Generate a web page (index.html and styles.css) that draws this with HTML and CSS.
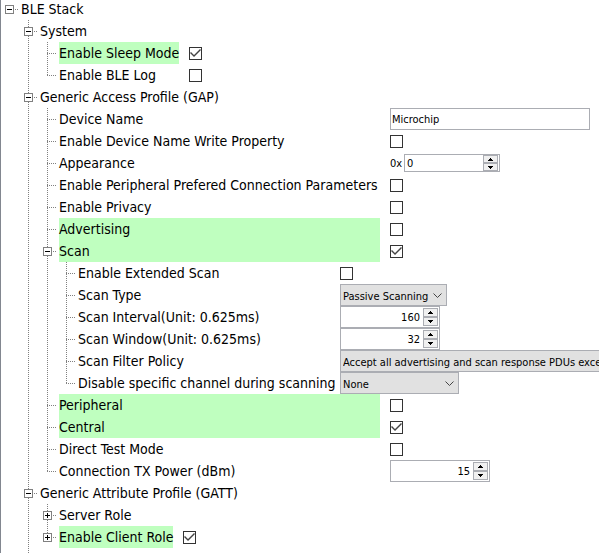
FILE: index.html
```html
<!DOCTYPE html>
<html lang="en">
<head>
<meta charset="utf-8">
<title>BLE Stack</title>
<link rel="stylesheet" href="styles.css">
</head>
<body>
<main class="panel">
<ul class="tree root">
  <li class="node">
    <div class="row"><span class="gutter"><button class="toggle" aria-label="Collapse BLE Stack"></button></span><span class="name">BLE Stack</span></div>
    <ul class="tree">
      <li class="node">
        <div class="row"><span class="gutter"><button class="toggle" aria-label="Collapse System"></button></span><span class="name">System</span></div>
        <ul class="tree cols-system">
          <li class="node"><div class="row"><span class="gutter"></span><label class="name on" for="sleep">Enable Sleep Mode</label><input class="check" type="checkbox" id="sleep" checked></div></li>
          <li class="node"><div class="row"><span class="gutter"></span><label class="name" for="log">Enable BLE Log</label><input class="check" type="checkbox" id="log"></div></li>
        </ul>
      </li>
      <li class="node">
        <div class="row"><span class="gutter"><button class="toggle" aria-label="Collapse Generic Access Profile"></button></span><span class="name">Generic Access Profile (GAP)</span></div>
        <ul class="tree cols-gap">
          <li class="node"><div class="row"><span class="gutter"></span><label class="name" for="device">Device Name</label><input class="text" type="text" id="device" value="Microchip"></div></li>
          <li class="node"><div class="row"><span class="gutter"></span><label class="name" for="write">Enable Device Name Write Property</label><input class="check" type="checkbox" id="write"></div></li>
          <li class="node"><div class="row"><span class="gutter"></span><label class="name" for="appearance">Appearance</label><span class="prefix">0x</span><span class="spinner hex"><input type="text" id="appearance" value="0"><span class="steps"><button aria-label="Increase"><svg viewBox="0 0 5 3"><path d="M2 0h1v1h1v1h1v1H0V2h1V1h1z"/></svg></button><button aria-label="Decrease"><svg viewBox="0 0 5 3"><path d="M0 0h5v1H4v1H3v1H2V2H1V1H0z"/></svg></button></span></span></div></li>
          <li class="node"><div class="row"><span class="gutter"></span><label class="name" for="params">Enable Peripheral Prefered Connection Parameters</label><input class="check" type="checkbox" id="params"></div></li>
          <li class="node"><div class="row"><span class="gutter"></span><label class="name" for="privacy">Enable Privacy</label><input class="check" type="checkbox" id="privacy"></div></li>
          <li class="node"><div class="row"><span class="gutter"></span><label class="name on" for="advertising">Advertising</label><input class="check" type="checkbox" id="advertising"></div></li>
          <li class="node">
            <div class="row"><span class="gutter"><button class="toggle" aria-label="Collapse Scan"></button></span><label class="name on" for="scan">Scan</label><input class="check" type="checkbox" id="scan" checked></div>
            <ul class="tree cols-scan">
              <li class="node"><div class="row"><span class="gutter"></span><label class="name" for="extended">Enable Extended Scan</label><input class="check" type="checkbox" id="extended"></div></li>
              <li class="node"><div class="row"><span class="gutter"></span><label class="name" for="type">Scan Type</label><span class="select type"><select id="type"><option>Passive Scanning</option></select><svg viewBox="0 0 9 6"><path d="M.5.5l4 4 4-4"/></svg></span></div></li>
              <li class="node"><div class="row"><span class="gutter"></span><label class="name" for="interval">Scan Interval(Unit: 0.625ms)</label><span class="spinner"><input type="text" id="interval" value="160"><span class="steps"><button aria-label="Increase"><svg viewBox="0 0 5 3"><path d="M2 0h1v1h1v1h1v1H0V2h1V1h1z"/></svg></button><button aria-label="Decrease"><svg viewBox="0 0 5 3"><path d="M0 0h5v1H4v1H3v1H2V2H1V1H0z"/></svg></button></span></span></div></li>
              <li class="node"><div class="row"><span class="gutter"></span><label class="name" for="window">Scan Window(Unit: 0.625ms)</label><span class="spinner"><input type="text" id="window" value="32"><span class="steps"><button aria-label="Increase"><svg viewBox="0 0 5 3"><path d="M2 0h1v1h1v1h1v1H0V2h1V1h1z"/></svg></button><button aria-label="Decrease"><svg viewBox="0 0 5 3"><path d="M0 0h5v1H4v1H3v1H2V2H1V1H0z"/></svg></button></span></span></div></li>
              <li class="node"><div class="row"><span class="gutter"></span><label class="name" for="policy">Scan Filter Policy</label><span class="select policy"><select id="policy"><option>Accept all advertising and scan response PDUs except</option></select><svg viewBox="0 0 9 6"><path d="M.5.5l4 4 4-4"/></svg></span></div></li>
              <li class="node"><div class="row"><span class="gutter"></span><label class="name" for="channel">Disable specific channel during scanning</label><span class="select channel"><select id="channel"><option>None</option></select><svg viewBox="0 0 9 6"><path d="M.5.5l4 4 4-4"/></svg></span></div></li>
            </ul>
          </li>
          <li class="node"><div class="row"><span class="gutter"></span><label class="name on" for="peripheral">Peripheral</label><input class="check" type="checkbox" id="peripheral"></div></li>
          <li class="node"><div class="row"><span class="gutter"></span><label class="name on" for="central">Central</label><input class="check" type="checkbox" id="central" checked></div></li>
          <li class="node"><div class="row"><span class="gutter"></span><label class="name" for="dtm">Direct Test Mode</label><input class="check" type="checkbox" id="dtm"></div></li>
          <li class="node"><div class="row"><span class="gutter"></span><label class="name" for="power">Connection TX Power (dBm)</label><span class="spinner"><input type="text" id="power" value="15"><span class="steps"><button aria-label="Increase"><svg viewBox="0 0 5 3"><path d="M2 0h1v1h1v1h1v1H0V2h1V1h1z"/></svg></button><button aria-label="Decrease"><svg viewBox="0 0 5 3"><path d="M0 0h5v1H4v1H3v1H2V2H1V1H0z"/></svg></button></span></span></div></li>
        </ul>
      </li>
      <li class="node continues">
        <div class="row"><span class="gutter"><button class="toggle" aria-label="Collapse Generic Attribute Profile"></button></span><span class="name">Generic Attribute Profile (GATT)</span></div>
        <ul class="tree cols-gatt">
          <li class="node"><div class="row"><span class="gutter"><button class="toggle closed" aria-label="Expand Server Role"></button></span><span class="name">Server Role</span></div></li>
          <li class="node"><div class="row"><span class="gutter"><button class="toggle closed" aria-label="Expand Enable Client Role"></button></span><label class="name on" for="client">Enable Client Role</label><input class="check" type="checkbox" id="client" checked></div></li>
        </ul>
      </li>
    </ul>
  </li>
</ul>
</main>
</body>
</html>
```
FILE: styles.css
```css
* { box-sizing: border-box; }

body {
  margin: 0;
  overflow: hidden;
  background: #fff;
  color: #000;
  font: 14px/22px "DejaVu Sans Condensed", Verdana, sans-serif;
}

.panel {
  min-height: 100vh;
  padding-left: 1px;
  border-left: 1px solid #828790;
  overflow: hidden;
}

.tree {
  margin: 0 0 0 19px;
  padding: 0;
  list-style: none;
}

.root { margin: -2px 0 0; }

.node { position: relative; }

/* vertical guide running past the node to its next sibling */
.tree .tree > .node::before {
  content: "";
  position: absolute;
  left: 7px;
  top: 0;
  bottom: 0;
  width: 1px;
  background: repeating-linear-gradient(#808080 0 1px, transparent 1px 2px);
}

.tree .tree > .node:last-child:not(.continues)::before {
  bottom: auto;
  height: 12px;
}

.continues { padding-bottom: 22px; }

.row {
  display: flex;
  align-items: center;
  height: 22px;
}

.gutter {
  flex: none;
  display: flex;
  align-items: center;
  width: 19px;
  height: 22px;
  padding: 1px 0 0 3px;
  background: repeating-linear-gradient(90deg, #808080 0 1px, transparent 1px 2px) 7px 11px / 10px 1px no-repeat;
}

.toggle {
  position: relative;
  width: 9px;
  height: 9px;
  padding: 0;
  border: 1px solid #808080;
  border-radius: 0;
  background: linear-gradient(#000, #000) center / 5px 1px no-repeat #fff;
}

.toggle.closed {
  background:
    linear-gradient(#000, #000) center / 5px 1px no-repeat,
    linear-gradient(#000, #000) center / 1px 5px no-repeat,
    #fff;
}

.name {
  flex: none;
  height: 22px;
  margin-right: 10px;
  white-space: nowrap;
}

.on { background: #bfffbf; }

.cols-system label { width: 120px; }
.cols-gap label { width: 321px; }
.cols-gap .cols-scan label { width: 252px; }
.cols-gatt label { width: 114px; }

.check {
  appearance: none;
  flex: none;
  width: 13px;
  height: 13px;
  margin: 1px 0 0;
  border: 1px solid #333;
  background: #fff;
}

.check:checked::before {
  content: "";
  display: block;
  width: 11px;
  height: 11px;
  background: #444;
  clip-path: polygon(0 5px, 1px 4px, 4px 7px, 10px 1px, 11px 2px, 4px 9px);
}

.text, .prefix, .spinner input, .select select {
  color: #000;
  font: 11px/20px "DejaVu Sans Condensed", Tahoma, sans-serif;
}

.text, .spinner {
  flex: none;
  height: 22px;
  border: 1px solid #abadb3;
  border-radius: 0;
  background: #fff;
}

.text {
  width: 200px;
  padding: 0 1px;
}

.prefix {
  width: 14px;
  padding-top: 1px;
}

.spinner {
  display: flex;
  width: 100px;
  padding: 1px;
}

.spinner input {
  flex: 1;
  min-width: 0;
  height: 18px;
  padding: 2px 3px 0;
  border: 0;
  background: none;
  text-align: right;
}

.spinner.hex {
  width: 96px;
  height: 18px;
  padding: 0 1px;
}

.hex input {
  height: 16px;
  padding: 1px 1px 0;
  text-align: left;
}

.steps {
  display: flex;
  flex-direction: column;
  width: 15px;
}

.steps button {
  flex: 1;
  display: flex;
  align-items: center;
  justify-content: center;
  min-height: 0;
  padding: 0;
  border: 1px solid #abadb3;
  border-radius: 0;
  background: #f0f0f0;
}

.steps svg {
  width: 5px;
  height: 3px;
  shape-rendering: crispEdges;
}

.select {
  position: relative;
  flex: none;
  height: 22px;
}

.select select {
  appearance: none;
  display: block;
  width: 100%;
  height: 22px;
  padding: 2px 2px 0;
  border: 1px solid #abadb3;
  border-radius: 0;
  background: #e1e1e1;
}

.select svg {
  position: absolute;
  right: 5px;
  top: 9px;
  width: 9px;
  height: 6px;
  fill: none;
  stroke: #444;
  pointer-events: none;
}

.type { width: 107px; }
.channel { width: 119px; }
.policy { width: 420px; }
```
